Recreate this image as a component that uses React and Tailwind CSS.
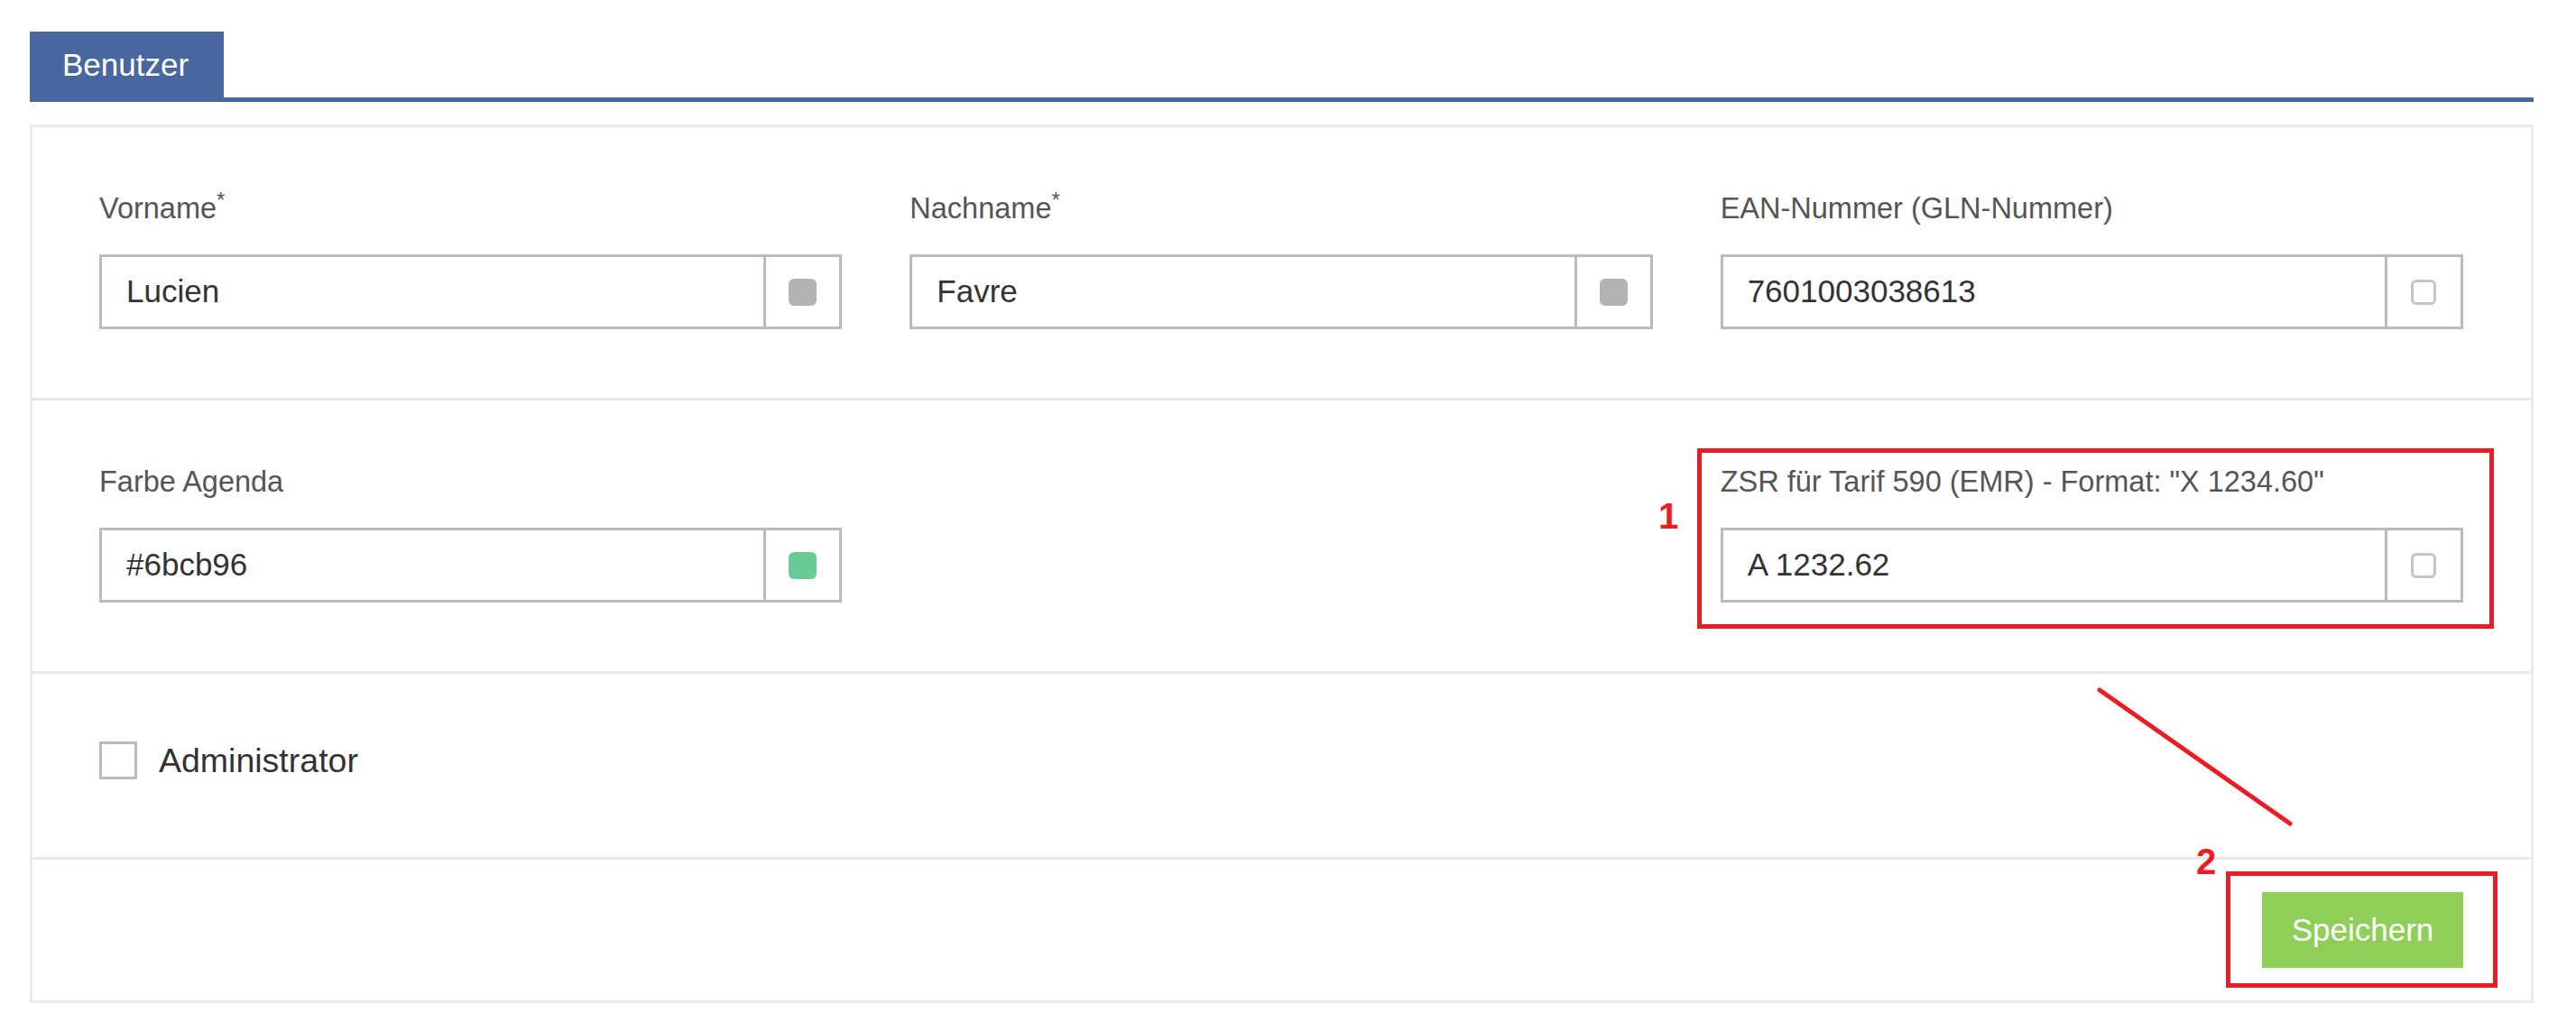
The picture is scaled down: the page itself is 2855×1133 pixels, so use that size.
import React from "react";

function Swatch({ kind }) {
  if (kind === "gray") return <div className="w-[31px] h-[30px] rounded-[6px] bg-[#b3b3b3]" />;
  if (kind === "green") return <div className="w-[31px] h-[30px] rounded-[6px] bg-[#6bcb96]" />;
  return <div className="w-[28px] h-[28px] rounded-[6px] border-[3px] border-[#c4c4c4] bg-white" />;
}

function Field({ label, req, value, swatch }) {
  return (
    <div>
      <div className="h-[46px] text-[32.5px] leading-[46px] text-[#555] whitespace-nowrap">
        {label}
        {req && <span className="relative -top-[12px] text-[24px] leading-none">*</span>}
      </div>
      <div className="mt-[28px] h-[83px] flex border-[3px] border-[#bbb] bg-white">
        <div className="flex-1 flex items-center pl-[27px] text-[35px] text-[#333]">{value}</div>
        <div className="w-[84px] border-l-[3px] border-[#bbb] flex items-center justify-center">
          <Swatch kind={swatch} />
        </div>
      </div>
    </div>
  );
}

export default function App() {
  return (
    <div className="relative w-[2855px] h-[1133px] bg-white overflow-hidden font-['Liberation_Sans',Arial,sans-serif]">
      <div className="pt-[35px] pl-[33px]">
        <div className="w-[2775px]">
          <div className="flex border-b-[5px] border-[#4866a0]">
            <div className="w-[215px] h-[73px] bg-[#4866a0] text-white text-[35px] flex items-center pl-[36px] pt-[2px]">
              Benutzer
            </div>
          </div>

          <div className="mt-[25px] border-[3px] border-[#ebebeb]">
            <div className="grid grid-cols-3 gap-x-[75px] pl-[74px] pr-[75px] pt-[67px] pb-[76px] border-b-[3px] border-[#e8e8e8]">
              <Field label="Vorname" req value="Lucien" swatch="gray" />
              <Field label="Nachname" req value="Favre" swatch="gray" />
              <Field label="EAN-Nummer (GLN-Nummer)" value="7601003038613" swatch="empty" />
            </div>

            <div className="grid grid-cols-3 gap-x-[75px] pl-[74px] pr-[75px] pt-[67px] pb-[76px] border-b-[3px] border-[#e8e8e8]">
              <Field label="Farbe Agenda" value="#6bcb96" swatch="green" />
              <div />
              <Field label={'ZSR für Tarif 590 (EMR) - Format: "X 1234.60"'} value="A 1232.62" swatch="empty" />
            </div>

            <div className="h-[206px] flex items-start gap-[24px] pl-[74px] pt-[75px] border-b-[3px] border-[#e8e8e8]">
              <div className="w-[42px] h-[42px] border-[3px] border-[#bbb] bg-white" />
              <span className="text-[37.5px] text-[#333] leading-[42px] h-[42px]">Administrator</span>
            </div>

            <div className="flex justify-end pr-[75px] pt-[36px] pb-[36px]">
              <button className="w-[223px] h-[84px] bg-[#8fcf57] text-white text-[35px] flex items-center justify-center">
                Speichern
              </button>
            </div>
          </div>
        </div>
      </div>

      {/* annotations */}
      <div className="absolute left-[1881px] top-[497px] w-[883px] h-[200px] border-[5px] border-[#ed1c24]" />
      <div className="absolute left-[1838px] top-[552px] text-[40px] leading-none font-bold text-[#ed1c24]">1</div>
      <div className="absolute left-[2467px] top-[966px] w-[301px] h-[129px] border-[5px] border-[#ed1c24]" />
      <div className="absolute left-[2434px] top-[935px] text-[40px] leading-none font-bold text-[#ed1c24]">2</div>
      <svg className="absolute left-0 top-0 pointer-events-none" width="2855" height="1133">
        <line x1="2327" y1="765" x2="2538" y2="913" stroke="#ed1c24" strokeWidth="5" strokeLinecap="round" />
      </svg>
    </div>
  );
}
